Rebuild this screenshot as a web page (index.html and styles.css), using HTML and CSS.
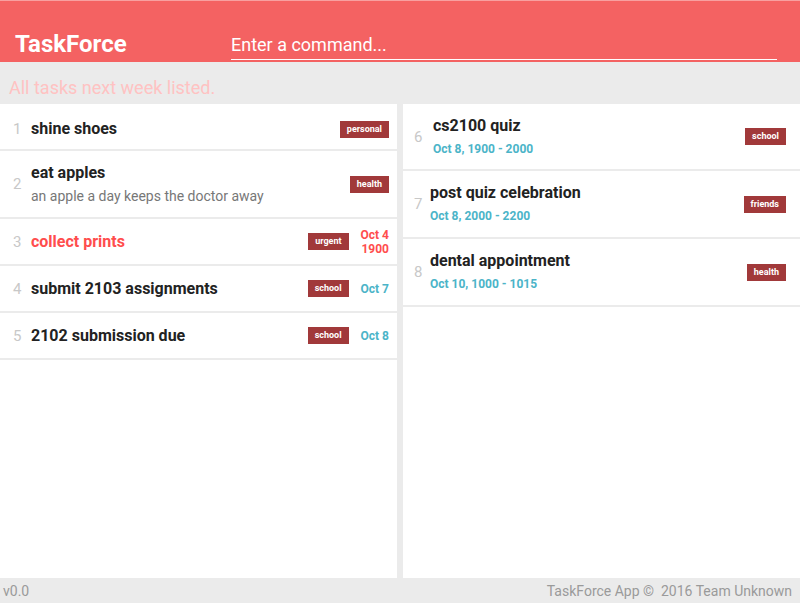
FILE: index.html
```html
<!DOCTYPE html>
<html>
<head>
<meta charset="utf-8">
<link rel="stylesheet" href="styles.css">
</head>
<body>
<div class="app">
  <header class="topbar">
    <div class="brand">TaskForce</div>
    <div class="command">Enter a command...</div>
  </header>
  <div class="status">All tasks next week listed.</div>
  <main class="lists">
    <section class="panel panel-left">
      <div class="row row-first">
        <span class="num">1</span>
        <div class="body"><div class="title">shine shoes</div></div>
        <span class="tag">personal</span>
      </div>
      <div class="row row-tall">
        <span class="num">2</span>
        <div class="body">
          <div class="title">eat apples</div>
          <div class="desc">an apple a day keeps the doctor away</div>
        </div>
        <span class="tag">health</span>
      </div>
      <div class="row">
        <span class="num">3</span>
        <div class="body"><div class="title urgent">collect prints</div></div>
        <span class="tag">urgent</span>
        <span class="date date-red">Oct 4<br>1900</span>
      </div>
      <div class="row">
        <span class="num">4</span>
        <div class="body"><div class="title">submit 2103 assignments</div></div>
        <span class="tag">school</span>
        <span class="date">Oct 7</span>
      </div>
      <div class="row">
        <span class="num">5</span>
        <div class="body"><div class="title">2102 submission due</div></div>
        <span class="tag">school</span>
        <span class="date">Oct 8</span>
      </div>
    </section>
    <section class="panel panel-right">
      <div class="row row-event">
        <span class="num">6</span>
        <div class="body shift">
          <div class="title">cs2100 quiz</div>
          <div class="when">Oct 8, 1900 - 2000</div>
        </div>
        <span class="tag">school</span>
      </div>
      <div class="row row-event">
        <span class="num">7</span>
        <div class="body">
          <div class="title">post quiz celebration</div>
          <div class="when">Oct 8, 2000 - 2200</div>
        </div>
        <span class="tag">friends</span>
      </div>
      <div class="row row-event">
        <span class="num">8</span>
        <div class="body">
          <div class="title">dental appointment</div>
          <div class="when">Oct 10, 1000 - 1015</div>
        </div>
        <span class="tag">health</span>
      </div>
    </section>
  </main>
  <footer class="footer">
    <span>v0.0</span>
    <span>TaskForce App &copy;&nbsp; 2016 Team Unknown</span>
  </footer>
</div>
</body>
</html>
```

FILE: styles.css
```css
* { box-sizing: border-box; }
html, body { margin: 0; padding: 0; }
body {
  font-family: Roboto, "Liberation Sans", sans-serif;
  background: #ebebeb;
  width: 800px;
  height: 603px;
  overflow: hidden;
}
.app {
  display: flex;
  flex-direction: column;
  height: 603px;
}
.topbar {
  height: 62px;
  flex: none;
  background: #f46262;
  border-top: 1px solid #f8a0a0;
  display: flex;
  align-items: flex-end;
  padding: 0 23px 2px 15px;
}
.brand {
  color: #fff;
  font-weight: bold;
  font-size: 24px;
  width: 216px;
  line-height: 28px;
  padding-bottom: 2px;
}
.command {
  flex: 1;
  color: #fff;
  font-size: 18px;
  line-height: 22px;
  padding-bottom: 3px;
  border-bottom: 1.5px solid #fff;
}
.status {
  height: 42px;
  flex: none;
  color: #ffc2c2;
  font-size: 18px;
  padding: 15px 0 0 9px;
  line-height: 22px;
}
.lists {
  flex: 1;
  display: flex;
  gap: 6px;
  min-height: 0;
}
.panel {
  flex: 1;
  background: #fff;
}
.row {
  display: flex;
  align-items: center;
  height: 47px;
  border-bottom: 2px solid #ebebeb;
  padding: 0 8px 0 13px;
}
.row-first { padding-top: 5px; }
.row-tall { height: 68px; }
.panel-right .row { padding: 0 14px 0 11px; }
.row-event { height: 68px; }
.row-event:first-child { height: 67px; }
.num {
  width: 18px;
  flex: none;
  color: #c8c8c8;
  font-size: 15px;
}
.panel-right .num { width: 16px; }
.body { flex: 1; }
.shift { padding-left: 3px; }
.title {
  font-weight: bold;
  font-size: 16px;
  color: #222;
  line-height: 20px;
}
.title.urgent { color: #ff4d4d; }
.desc {
  color: #777;
  font-size: 14px;
  line-height: 18px;
  margin-top: 4px;
}
.when {
  color: #4bb4c8;
  font-weight: bold;
  font-size: 12px;
  line-height: 16px;
  margin-top: 5px;
}
.row-event .title { margin-top: -1px; }
.tag {
  flex: none;
  background: #a1393a;
  color: #fff;
  font-size: 9px;
  font-weight: bold;
  height: 17px;
  line-height: 17px;
  padding: 0 7px;
}
.date {
  flex: none;
  margin-left: 12px;
  color: #4bb4c8;
  font-weight: bold;
  font-size: 12px;
  line-height: 14px;
  text-align: right;
}
.date-red { color: #ff4d4d; }
.footer {
  height: 25px;
  flex: none;
  display: flex;
  justify-content: space-between;
  align-items: center;
  padding: 1px 8px 0 3px;
  color: #9a9a9a;
  font-size: 14px;
}
```
